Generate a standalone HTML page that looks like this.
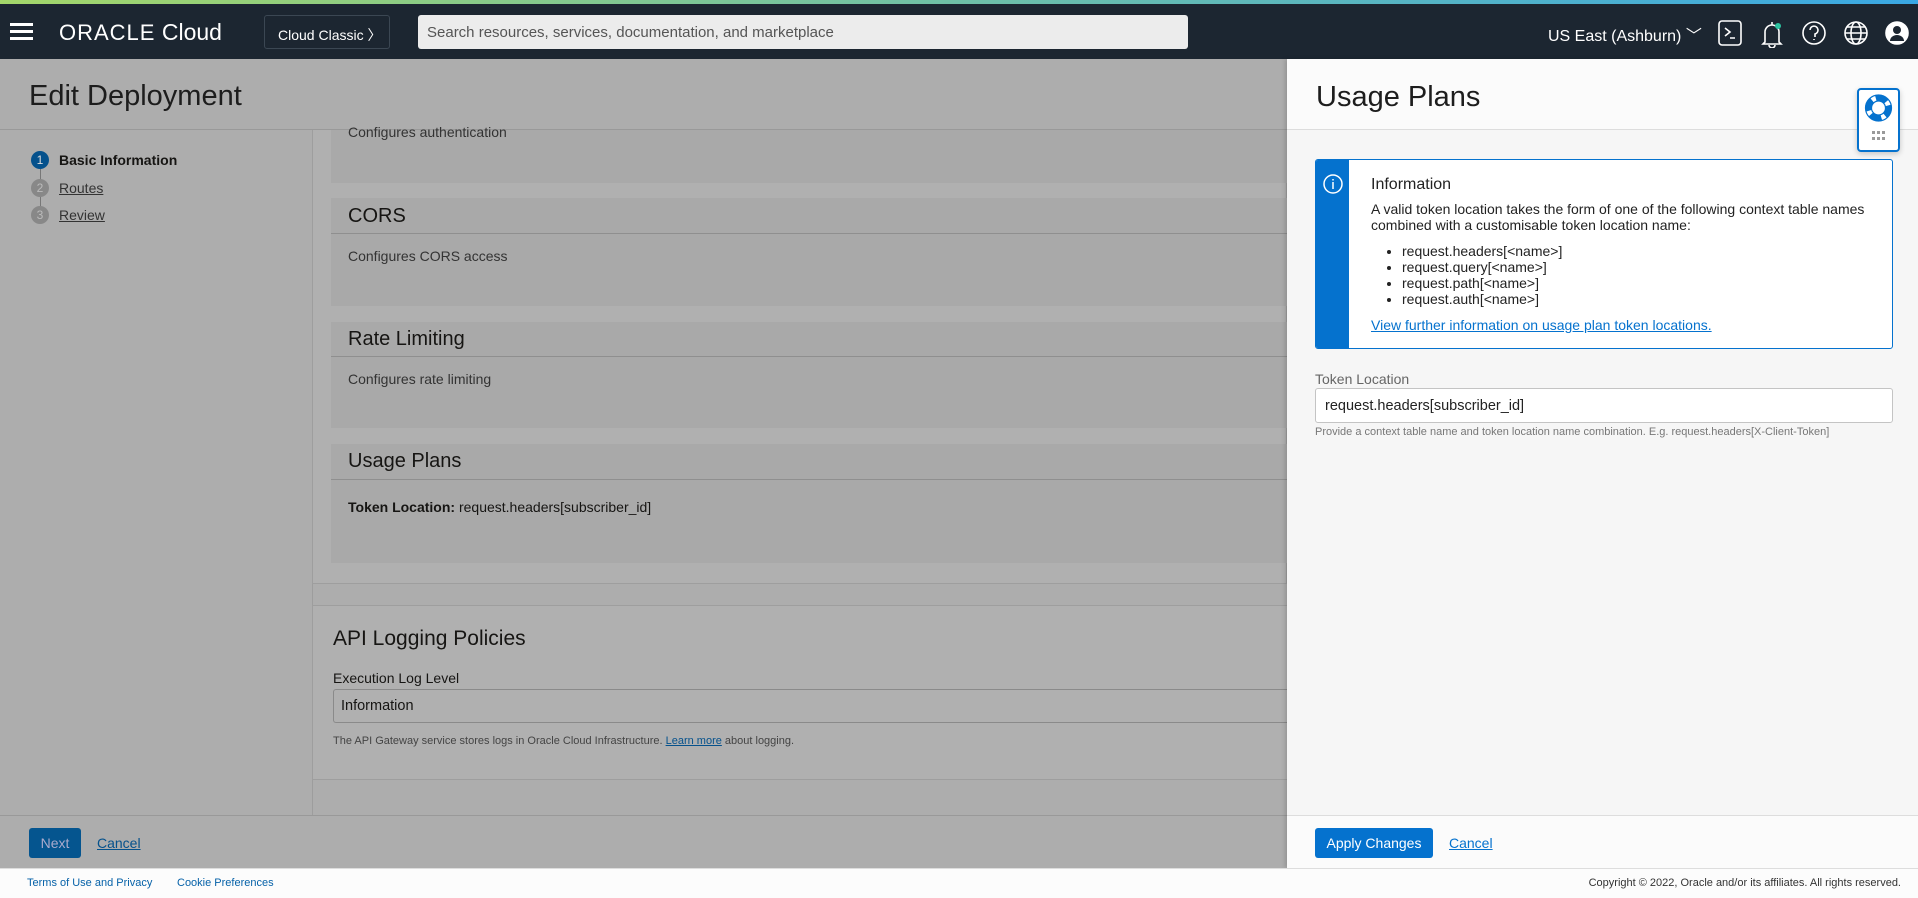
<!DOCTYPE html>
<html><head><meta charset="utf-8"><style>
*{box-sizing:border-box;margin:0;padding:0}
body{width:1918px;height:898px;overflow:hidden;position:relative;font-family:"Liberation Sans",Arial,sans-serif;background:#adadad;color:#161513;font-size:15px}
.a{position:absolute}
.u{text-decoration:underline}
</style></head><body>
<div class="a" style="left:0;top:0;width:1918px;height:4px;background:linear-gradient(90deg,#a3d66a,#3aa8e4)"></div>
<div class="a" style="left:0;top:4px;width:1918px;height:55px;background:#1c2631"></div>
<div class="a" style="left:10px;top:23px;width:23px;height:3px;background:#fff;box-shadow:0 7px 0 #fff,0 14px 0 #fff"></div>
<div class="a" style="left:59px;top:19px;color:#fff;font-size:23px"><span style="letter-spacing:1px;font-size:22px">ORACLE</span> Cloud</div>
<div class="a" style="left:264px;top:15px;width:126px;height:34px;border:1px solid #3b4753;border-radius:3px;color:#fff;font-size:14px;padding:9px 0 0 13px">Cloud Classic 〉</div>
<div class="a" style="left:418px;top:15px;width:770px;height:34px;background:#ececec;border-radius:3px;color:#555;font-size:15px;padding:9px 0 0 9px">Search resources, services, documentation, and marketplace</div>
<div class="a" style="left:1548px;top:22px;color:#fff;font-size:16px">US East (Ashburn) ﹀</div>
<svg class="a" style="left:1716px;top:18px" width="200" height="30" viewBox="0 0 200 30" fill="none" stroke="#fff" stroke-width="1.6">
<rect x="3" y="3" width="22" height="24" rx="3"/><path d="M9 10l5 4-5 4M14 20h5"/>
<path d="M49 24V14a7 7 0 0 1 14 0v10l2 2H47zM53 27a3 3 0 0 0 6 0M56 4v3"/><circle cx="62" cy="8" r="3" fill="#2bc3a0" stroke="none"/>
<circle cx="98" cy="15" r="11"/><path d="M94 12a4 4 0 1 1 5 4v3M98 21v1"/>
<circle cx="140" cy="15" r="11"/><ellipse cx="140" cy="15" rx="5" ry="11"/><path d="M129 15h22M131 9h18M131 21h18"/>
<circle cx="181" cy="15" r="11" fill="#fff"/><circle cx="181" cy="12" r="4" fill="#1c2631" stroke="none"/><path d="M174 23a7 6 0 0 1 14 0" fill="#1c2631" stroke="none"/>
</svg>
<div class="a" style="left:29px;top:80px;font-size:29px;color:#1d1d1d">Edit Deployment</div>
<div class="a" style="left:0;top:129px;width:1287px;height:1px;background:#999"></div>
<div class="a" style="left:40px;top:158px;width:1px;height:56px;background:#777"></div>
<div class="a" style="left:31px;top:151px;width:18px;height:18px;border-radius:50%;background:#05518c;color:#ddd;font-size:12px;text-align:center;line-height:18px">1</div>
<div class="a" style="left:59px;top:152px;font-weight:bold;font-size:14px">Basic Information</div>
<div class="a" style="left:31px;top:179px;width:18px;height:18px;border-radius:50%;background:#888;color:#bbb;font-size:12px;text-align:center;line-height:18px">2</div>
<div class="a u" style="left:59px;top:180px;font-size:14px;color:#333">Routes</div>
<div class="a" style="left:31px;top:206px;width:18px;height:18px;border-radius:50%;background:#888;color:#bbb;font-size:12px;text-align:center;line-height:18px">3</div>
<div class="a u" style="left:59px;top:207px;font-size:14px;color:#333">Review</div>
<div class="a" style="left:312px;top:130px;width:1px;height:686px;background:#9d9d9d"></div>
<div class="a" style="left:312px;top:130px;width:975px;height:454px;background:#b0b0b0;border:1px solid #9e9e9e;border-top:none"></div>
<div class="a" style="left:331px;top:130px;width:956px;height:53px;background:#a9a9a9"></div>
<div class="a" style="left:348px;top:124px;font-size:14px;color:#333">Configures authentication</div>
<div class="a" style="left:331px;top:198px;width:956px;height:108px;background:#a9a9a9"></div>
<div class="a" style="left:331px;top:198px;width:956px;height:36px;border-bottom:1px solid #8f8f8f;font-size:20px;padding:7px 0 0 17px">CORS</div>
<div class="a" style="left:348px;top:248px;font-size:14px;color:#333">Configures CORS access</div>
<div class="a" style="left:331px;top:322px;width:956px;height:106px;background:#a9a9a9"></div>
<div class="a" style="left:331px;top:322px;width:956px;height:35px;border-bottom:1px solid #8f8f8f;font-size:20px;padding:6px 0 0 17px">Rate Limiting</div>
<div class="a" style="left:348px;top:371px;font-size:14px;color:#333">Configures rate limiting</div>
<div class="a" style="left:331px;top:444px;width:956px;height:119px;background:#a9a9a9"></div>
<div class="a" style="left:331px;top:444px;width:956px;height:36px;border-bottom:1px solid #8f8f8f;font-size:20px;padding:6px 0 0 17px">Usage Plans</div>
<div class="a" style="left:348px;top:499px;font-size:14px"><b>Token Location:</b> request.headers[subscriber_id]</div>
<div class="a" style="left:312px;top:605px;width:975px;height:175px;background:#b0b0b0;border:1px solid #9e9e9e;border-right:none"></div>
<div class="a" style="left:333px;top:627px;font-size:21px">API Logging Policies</div>
<div class="a" style="left:333px;top:670px;font-size:14px">Execution Log Level</div>
<div class="a" style="left:333px;top:689px;width:954px;height:34px;border:1px solid #8a8a8a;border-right:none;border-radius:3px 0 0 3px;font-size:14.5px;padding:8px 0 0 7px">Information</div>
<div class="a" style="left:333px;top:735px;font-size:11px;color:#444">The API Gateway service stores logs in Oracle Cloud Infrastructure. <span class="u" style="color:#05518c">Learn more</span> about logging.</div>
<div class="a" style="left:0;top:815px;width:1287px;height:1px;background:#999"></div>
<div class="a" style="left:29px;top:828px;width:52px;height:30px;background:#05558f;border-radius:3px;color:#aac;font-size:14px;text-align:center;line-height:30px">Next</div>
<div class="a u" style="left:97px;top:835px;font-size:14px;color:#05518c">Cancel</div>
<div class="a" style="left:1287px;top:59px;width:631px;height:809px;background:#f6f6f6;box-shadow:-2px 0 4px rgba(0,0,0,.15)"></div>
<div class="a" style="left:1287px;top:59px;width:631px;height:71px;background:#fbfbfb;border-bottom:1px solid #ddd"></div>
<div class="a" style="left:1316px;top:81px;font-size:29px;color:#1d1d1d">Usage Plans</div>
<div class="a" style="left:1857px;top:88px;width:43px;height:64px;background:#fff;border:2px solid #0572ce;border-radius:4px;box-shadow:0 2px 6px rgba(0,0,0,.2)"></div>
<svg class="a" style="left:1863px;top:93px" width="31" height="55" viewBox="0 0 31 55"><circle cx="15.5" cy="15" r="10" fill="none" stroke="#0572ce" stroke-width="6" stroke-dasharray="11.5 4.2" stroke-dashoffset="3"/><circle cx="15.5" cy="15" r="13" fill="none" stroke="#0572ce" stroke-width="1.2"/><circle cx="15.5" cy="15" r="7" fill="none" stroke="#0572ce" stroke-width="1.2"/><g fill="#9a9a9a"><rect x="9" y="38" width="3" height="3"/><rect x="14" y="38" width="3" height="3"/><rect x="19" y="38" width="3" height="3"/><rect x="9" y="44" width="3" height="3"/><rect x="14" y="44" width="3" height="3"/><rect x="19" y="44" width="3" height="3"/></g></svg>
<div class="a" style="left:1315px;top:159px;width:578px;height:190px;background:#fff;border:1px solid #0572ce;border-radius:3px;overflow:hidden">
<div class="a" style="left:0;top:0;width:33px;height:190px;background:#0572ce"></div>
<svg class="a" style="left:6px;top:13px" width="22" height="22" viewBox="0 0 22 22" fill="none" stroke="#fff" stroke-width="1.5"><circle cx="11" cy="11" r="9"/><path d="M11 9v7M11 6v1.5"/></svg>
</div>
<div class="a" style="left:1371px;top:176px;font-size:16px;color:#222">Information</div>
<div class="a" style="left:1371px;top:201px;font-size:14px;color:#222;line-height:16px;width:510px">A valid token location takes the form of one of the following context table names combined with a customisable token location name:</div>
<ul class="a" style="left:1402px;top:243px;font-size:14px;color:#222;line-height:16px">
<li>request.headers[&lt;name&gt;]</li><li>request.query[&lt;name&gt;]</li><li>request.path[&lt;name&gt;]</li><li>request.auth[&lt;name&gt;]</li></ul>
<div class="a u" style="left:1371px;top:317px;font-size:14px;color:#0572ce">View further information on usage plan token locations.</div>
<div class="a" style="left:1315px;top:371px;font-size:14px;color:#666">Token Location</div>
<div class="a" style="left:1315px;top:388px;width:578px;height:35px;background:#fff;border:1px solid #c4c4c4;border-radius:3px;font-size:14.5px;padding:9px 0 0 9px;color:#222">request.headers[subscriber_id]</div>
<div class="a" style="left:1315px;top:426px;font-size:11px;color:#777">Provide a context table name and token location name combination. E.g. request.headers[X-Client-Token]</div>
<div class="a" style="left:1287px;top:815px;width:631px;height:53px;background:#fbfbfb;border-top:1px solid #ddd"></div>
<div class="a" style="left:1315px;top:828px;width:118px;height:30px;background:#0572ce;border-radius:3px;color:#fff;font-size:14px;text-align:center;line-height:30px">Apply Changes</div>
<div class="a u" style="left:1449px;top:835px;font-size:14px;color:#0572ce">Cancel</div>
<div class="a" style="left:0;top:868px;width:1918px;height:30px;background:#fcfcfc;border-top:1px solid #ddd"></div>
<div class="a" style="left:27px;top:877px;font-size:11px;color:#0561a8">Terms of Use and Privacy</div>
<div class="a" style="left:177px;top:877px;font-size:11px;color:#0561a8">Cookie Preferences</div>
<div class="a" style="right:17px;top:877px;font-size:11px;color:#333">Copyright © 2022, Oracle and/or its affiliates. All rights reserved.</div>
</body></html>
